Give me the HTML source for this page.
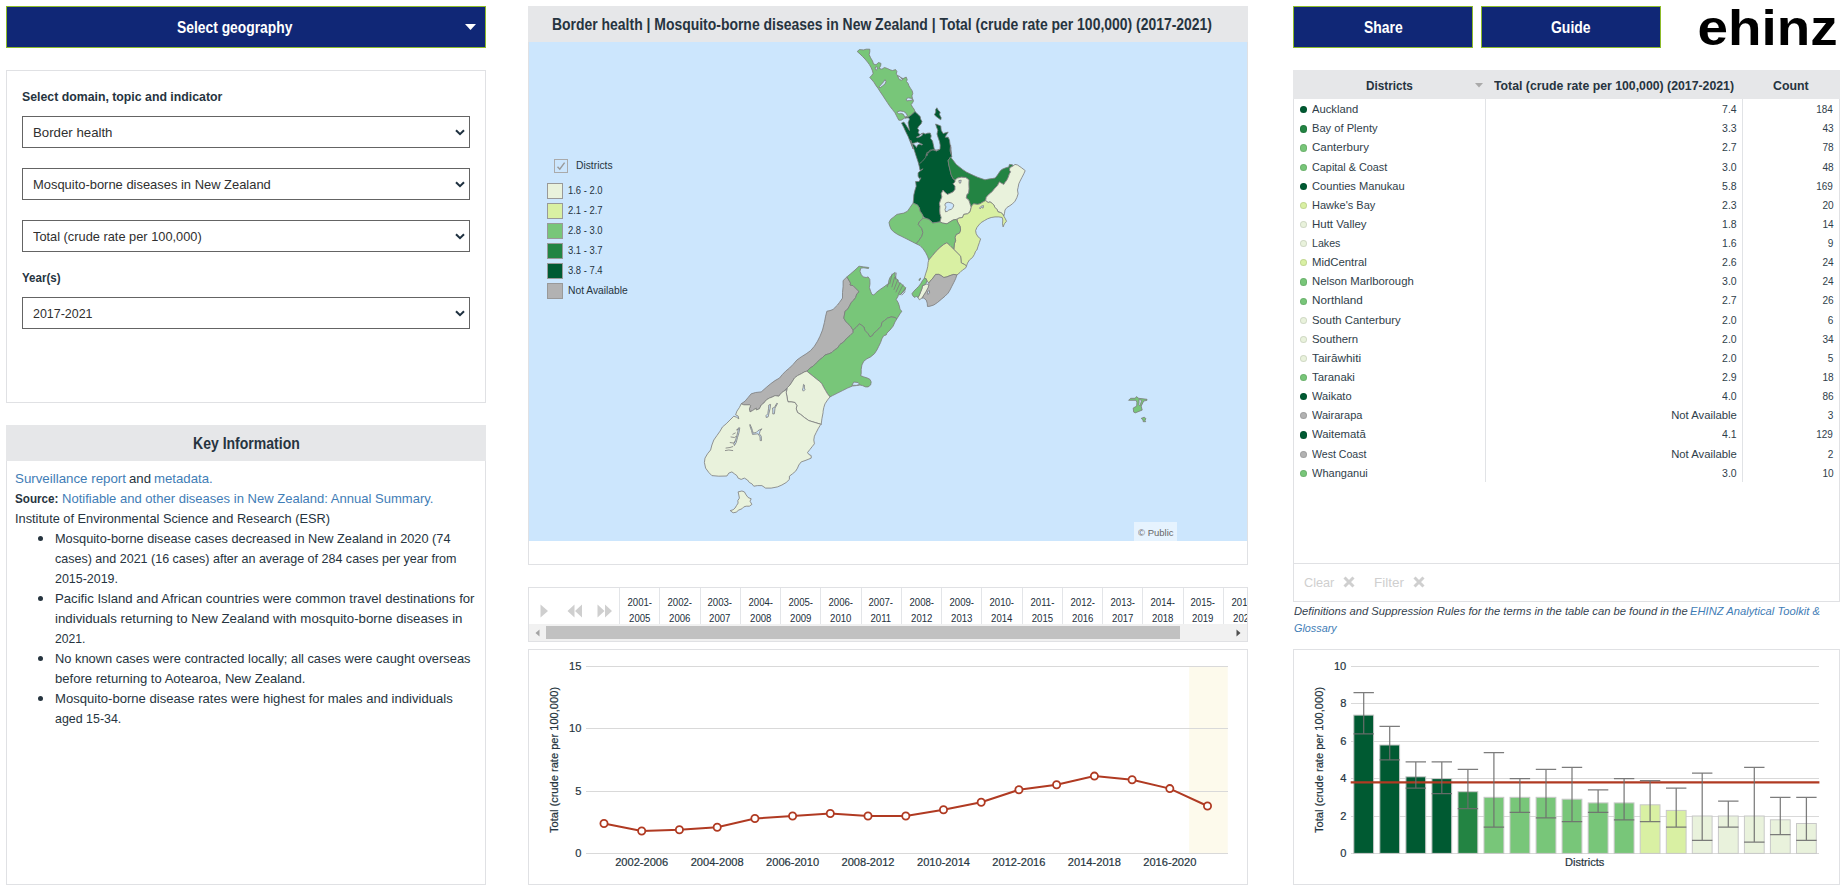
<!DOCTYPE html>
<html lang="en">
<head>
<meta charset="utf-8">
<title>EHINZ – Mosquito-borne diseases in New Zealand</title>
<style>
html,body{margin:0;padding:0;background:#fff}
body{width:1841px;height:896px;position:relative;overflow:hidden;font-family:"Liberation Sans",Arial,sans-serif;color:#22303c}
.t{position:absolute;white-space:nowrap;line-height:1;font-family:"Liberation Sans", Arial, sans-serif}
section{position:absolute;left:0;top:0;width:1841px;height:896px}
.abs{position:absolute;box-sizing:border-box}
.btn{background:#102776;border:1px solid #8dbb2a}
.panel{border:1px solid #e0e1e4;background:#fff}
.hdr{background:#e6e7e9}
.sel{border:1px solid #646464;background:#fff;left:22px;width:448px;height:32px}
.sel svg{position:absolute;right:4px;top:12px}
.bul{position:absolute;width:5px;height:5px;border-radius:50%;background:#26343f;left:37.9px}
.cell{position:absolute;top:0;width:40.26px;height:36px;border-left:1px solid #e3e5e8;box-sizing:border-box;text-align:center;font-size:10px;line-height:15.8px;color:#22303c;padding-top:7.2px}
.cell span{display:inline-block;transform:scaleX(.96)}
.dot{position:absolute;left:1299.5px;width:7.2px;height:7.2px;border-radius:50%;display:block;box-shadow:inset 0 0 0 1px rgba(0,0,0,.1)}
.sw{position:absolute;left:547px;width:16px;height:16px;box-sizing:border-box;border:1px solid #999}
svg text{font-family:"Liberation Sans",Arial,sans-serif;font-size:11.1px;fill:#263540;stroke:#263540;stroke-width:.2px}
#map path{stroke:#7b7b7b;stroke-width:.8;stroke-linejoin:round}
</style>
</head>
<body>

<!-- ======================= LEFT COLUMN ======================= -->
<section id="left">
  <div class="abs btn" style="left:6px;top:6px;width:480px;height:42px"></div>
  <svg class="abs" style="left:465px;top:24px" width="11" height="6" viewBox="0 0 11 6"><path d="M0 0H11L5.5 6Z" fill="#fff"/></svg>

  <div class="abs panel" style="left:6px;top:70px;width:480px;height:333px"></div>
  <div class="abs sel" style="top:116px"><svg width="10" height="7" viewBox="0 0 10 7"><path d="M1 1.2L5 5.2L9 1.2" fill="none" stroke="#1f3140" stroke-width="2"/></svg></div>
  <div class="abs sel" style="top:168px"><svg width="10" height="7" viewBox="0 0 10 7"><path d="M1 1.2L5 5.2L9 1.2" fill="none" stroke="#1f3140" stroke-width="2"/></svg></div>
  <div class="abs sel" style="top:220px"><svg width="10" height="7" viewBox="0 0 10 7"><path d="M1 1.2L5 5.2L9 1.2" fill="none" stroke="#1f3140" stroke-width="2"/></svg></div>
  <div class="abs sel" style="top:297px"><svg width="10" height="7" viewBox="0 0 10 7"><path d="M1 1.2L5 5.2L9 1.2" fill="none" stroke="#1f3140" stroke-width="2"/></svg></div>

  <div class="abs panel" style="left:6px;top:425px;width:480px;height:460px"></div>
  <div class="abs hdr" style="left:6px;top:425px;width:480px;height:36px"></div>
  <i class="bul" style="top:535.5px"></i><i class="bul" style="top:595.5px"></i><i class="bul" style="top:655.5px"></i><i class="bul" style="top:695.5px"></i>
<span class="t" id="t0" style="top:20.00px;font-size:15.6px;color:#fff;font-weight:700;left:176.70px;transform-origin:0 0;transform:scaleX(0.8877);">Select geography</span>
<span class="t" id="t1" style="top:90.00px;font-size:13.4px;color:#263440;font-weight:700;left:22.20px;transform-origin:0 0;transform:scaleX(0.9187);">Select domain, topic and indicator</span>
<span class="t" id="t2" style="top:126.00px;font-size:13.1px;color:#2f2f2f;left:32.80px;transform-origin:0 0;transform:scaleX(1.0111);">Border health</span>
<span class="t" id="t3" style="top:178.00px;font-size:13.1px;color:#2f2f2f;left:32.80px;transform-origin:0 0;transform:scaleX(0.9870);">Mosquito-borne diseases in New Zealand</span>
<span class="t" id="t4" style="top:230.00px;font-size:13.1px;color:#2f2f2f;left:32.80px;transform-origin:0 0;transform:scaleX(0.9779);">Total (crude rate per 100,000)</span>
<span class="t" id="t5" style="top:271.00px;font-size:13.4px;color:#263440;font-weight:700;left:22.20px;transform-origin:0 0;transform:scaleX(0.8641);">Year(s)</span>
<span class="t" id="t6" style="top:307.00px;font-size:13.1px;color:#2f2f2f;left:32.50px;transform-origin:0 0;transform:scaleX(0.9501);">2017-2021</span>
<span class="t" id="t7" style="top:436.00px;font-size:15.6px;color:#263440;font-weight:700;left:192.50px;transform-origin:0 0;transform:scaleX(0.8997);">Key Information</span>
<span class="t" id="t8" style="top:472.00px;font-size:13.2px;color:#3f7db6;left:14.50px;transform-origin:0 0;transform:scaleX(1.0095);">Surveillance report</span>
<span class="t" id="t9" style="top:472.00px;font-size:13.2px;color:#263440;left:128.75px;transform-origin:0 0;transform:scaleX(0.9993);">and</span>
<span class="t" id="t10" style="top:472.00px;font-size:13.2px;color:#3f7db6;left:154.25px;transform-origin:0 0;transform:scaleX(1.0016);">metadata.</span>
<span class="t" id="t11" style="top:492.00px;font-size:13.2px;color:#263440;font-weight:700;left:14.50px;transform-origin:0 0;transform:scaleX(0.8858);">Source:</span>
<span class="t" id="t12" style="top:492.00px;font-size:13.2px;color:#3f7db6;left:61.50px;transform-origin:0 0;transform:scaleX(0.9885);">Notifiable and other diseases in New Zealand: Annual Summary.</span>
<span class="t" id="t13" style="top:512.00px;font-size:13.2px;color:#263440;left:14.50px;transform-origin:0 0;transform:scaleX(0.9701);">Institute of Environmental Science and Research (ESR)</span>
<span class="t" id="t14" style="top:532.00px;font-size:13.2px;color:#263440;left:54.50px;transform-origin:0 0;transform:scaleX(0.9668);">Mosquito-borne disease cases decreased in New Zealand in 2020 (74</span>
<span class="t" id="t15" style="top:552.00px;font-size:13.2px;color:#263440;left:54.50px;transform-origin:0 0;transform:scaleX(0.9492);">cases) and 2021 (16 cases) after an average of 284 cases per year from</span>
<span class="t" id="t16" style="top:572.00px;font-size:13.2px;color:#263440;left:54.50px;transform-origin:0 0;transform:scaleX(0.9440);">2015-2019.</span>
<span class="t" id="t17" style="top:592.00px;font-size:13.2px;color:#263440;left:54.50px;transform-origin:0 0;transform:scaleX(0.9988);">Pacific Island and African countries were common travel destinations for</span>
<span class="t" id="t18" style="top:612.00px;font-size:13.2px;color:#263440;left:54.50px;transform-origin:0 0;transform:scaleX(1.0052);">individuals returning to New Zealand with mosquito-borne diseases in</span>
<span class="t" id="t19" style="top:632.00px;font-size:13.2px;color:#263440;left:54.50px;transform-origin:0 0;transform:scaleX(0.9238);">2021.</span>
<span class="t" id="t20" style="top:652.00px;font-size:13.2px;color:#263440;left:54.50px;transform-origin:0 0;transform:scaleX(0.9756);">No known cases were contracted locally; all cases were caught overseas</span>
<span class="t" id="t21" style="top:672.00px;font-size:13.2px;color:#263440;left:54.50px;transform-origin:0 0;transform:scaleX(0.9904);">before returning to Aotearoa, New Zealand.</span>
<span class="t" id="t22" style="top:692.00px;font-size:13.2px;color:#263440;left:54.50px;transform-origin:0 0;transform:scaleX(0.9918);">Mosquito-borne disease rates were highest for males and individuals</span>
<span class="t" id="t23" style="top:712.00px;font-size:13.2px;color:#263440;left:54.50px;transform-origin:0 0;transform:scaleX(0.9417);">aged 15-34.</span>
</section>

<!-- ======================= CENTRE COLUMN ======================= -->
<section id="center">
  <div class="abs panel" style="left:528px;top:6px;width:720px;height:559px;border-top:0"></div>
  <div class="abs hdr" style="left:528px;top:6px;width:720px;height:36px"></div>
  <svg id="map" class="abs" style="left:529px;top:42px" width="718" height="499" viewBox="529 42 718 499">
    <rect x="528" y="42" width="719" height="499" fill="#cce6fd"/>
<path d="M857.2 51.5 L859.4 49.6 L863.5 49.9 L866.2 49.2 L869.8 49.2 L869.8 51.8 L869.2 54.6 L870.6 57.8 L872.5 60.9 L873.5 64.0 L876.0 64.8 L878.5 62.5 L881.0 63.4 L880.6 65.9 L879.1 68.4 L881.9 69.2 L884.4 67.5 L887.5 68.5 L890.0 69.8 L892.5 70.5 L895.6 69.6 L896.9 71.5 L896.2 74.0 L898.1 75.9 L900.6 77.5 L903.1 78.6 L906.2 77.1 L907.2 79.6 L906.5 81.5 L908.1 83.4 L909.0 85.9 L910.6 88.4 L912.2 90.9 L912.8 93.4 L911.9 95.9 L912.5 98.4 L913.5 100.9 L912.5 102.8 L911.2 104.6 L912.5 107.1 L914.0 109.0 L915.0 111.5 L912.5 114.0 L910.0 115.9 L908.1 117.1 L905.0 117.8 L903.1 119.0 L901.2 120.2 L898.8 120.2 L897.5 117.8 L896.2 115.2 L895.0 112.8 L892.5 109.6 L890.0 106.5 L887.5 102.8 L885.0 99.0 L882.5 95.2 L880.0 91.5 L878.1 88.4 L876.2 85.9 L873.8 82.1 L871.2 79.0 L869.8 77.5 L871.9 75.2 L873.1 73.4 L872.5 70.9 L871.2 67.8 L869.4 64.6 L867.5 62.1 L865.0 59.0 L862.5 56.5 L860.0 54.0Z" fill="#78c679"/>
<path d="M915.0 111.5 L917.5 114.0 L920.2 116.5 L920.6 119.0 L922.0 121.5 L921.0 124.0 L919.0 125.9 L917.5 128.4 L919.0 130.2 L918.1 132.8 L920.0 134.6 L923.1 133.0 L925.2 134.0 L927.5 133.2 L930.2 133.0 L931.2 135.9 L930.6 138.4 L932.5 140.9 L933.2 144.0 L934.0 147.8 L934.5 149.8 L936.5 151.0 L940.0 149.2 L940.2 145.2 L939.5 141.5 L938.2 137.8 L937.0 134.0 L937.8 130.2 L936.5 127.1 L935.6 124.0 L937.8 124.8 L940.8 126.0 L941.2 130.2 L943.1 133.5 L948.2 132.1 L946.2 135.2 L945.0 137.2 L948.2 137.2 L949.5 140.2 L950.0 144.0 L950.8 147.8 L950.2 151.5 L951.5 155.2 L950.6 145.0 L950.0 150.0 L951.2 153.8 L951.9 156.9 L950.6 156.9 L948.1 160.6 L948.8 165.0 L950.0 170.0 L951.2 175.0 L953.1 178.8 L955.0 180.0 L955.0 181.9 L953.1 183.8 L955.0 186.2 L955.0 189.4 L953.1 191.9 L950.6 193.1 L947.5 194.4 L944.4 191.9 L943.1 190.0 L941.2 193.8 L941.9 196.9 L940.6 200.0 L939.4 203.8 L940.0 206.2 L939.8 210.0 L940.0 213.8 L941.2 217.5 L940.0 221.9 L936.2 222.5 L932.5 223.1 L931.2 221.2 L928.8 219.4 L925.0 218.1 L923.1 216.2 L921.9 213.8 L920.0 211.2 L919.4 208.1 L917.5 205.0 L913.1 203.1 L913.5 200.0 L913.8 195.0 L915.0 190.0 L916.2 186.2 L915.6 181.5 L919.0 181.5 L921.0 177.8 L919.4 178.5 L918.1 176.2 L918.1 172.8 L920.2 171.0 L923.1 168.8 L920.0 170.5 L919.4 166.9 L918.1 161.9 L916.2 156.2 L914.4 150.6 L912.5 145.0 L910.6 140.0 L913.1 149.0 L910.6 142.8 L908.1 136.5 L905.6 131.5 L903.8 127.5 L901.5 123.0 L903.8 122.0 L905.8 124.8 L907.5 127.5 L909.5 130.5 L908.8 126.5 L908.1 122.8 L909.5 119.0 L908.5 117.8 L905.0 118.0 L908.1 117.1 L910.0 115.9 L912.5 114.0Z" fill="#005a32"/>
<path d="M936.9 107.8 L938.2 110.2 L940.2 112.1 L939.5 114.6 L941.2 117.8 L940.8 119.8 L938.8 118.5 L936.2 116.5 L934.4 114.8 L935.8 112.1 L935.6 109.6Z" fill="#005a32"/>
<path d="M950.6 156.9 L951.9 158.8 L954.4 161.9 L956.2 164.4 L959.4 166.9 L962.5 169.4 L966.2 171.9 L970.0 173.8 L973.8 175.6 L977.5 177.2 L981.2 178.5 L985.0 179.8 L988.8 179.0 L992.5 178.5 L995.2 178.0 L997.5 175.0 L1000.0 171.2 L1001.9 169.4 L1005.0 168.1 L1008.8 166.9 L1009.4 164.4 L1012.5 164.8 L1012.8 166.2 L1010.0 167.5 L1009.4 170.0 L1010.6 171.9 L1009.4 173.8 L1008.1 177.5 L1006.9 180.0 L1005.0 182.5 L1003.8 184.4 L1001.2 183.1 L999.4 181.9 L997.5 185.6 L995.0 188.1 L992.5 191.2 L990.6 193.1 L988.1 195.0 L986.2 197.5 L985.6 200.6 L983.1 201.9 L980.0 203.8 L977.5 204.4 L973.8 203.8 L971.9 205.6 L971.2 207.5 L970.0 203.8 L968.8 200.0 L966.2 198.1 L966.9 194.4 L968.5 193.1 L969.0 188.8 L968.8 183.8 L969.0 179.8 L965.6 177.5 L961.2 177.2 L957.5 178.1 L955.0 180.0 L953.1 178.8 L951.2 175.0 L950.0 170.0 L948.8 165.0 L948.1 160.6Z" fill="#238443"/>
<path d="M955.0 180.0 L957.5 178.1 L961.2 177.2 L965.6 177.5 L969.0 179.8 L968.8 183.8 L969.0 188.8 L968.5 193.1 L966.9 194.4 L966.2 198.1 L968.8 200.0 L970.0 203.8 L971.2 207.5 L970.0 211.9 L967.5 213.8 L963.8 214.4 L962.5 217.5 L958.8 218.1 L956.2 219.4 L953.1 220.0 L950.0 221.9 L946.9 223.8 L942.5 223.1 L940.0 221.9 L941.2 217.5 L940.0 213.8 L939.8 210.0 L940.0 206.2 L939.4 203.8 L940.6 200.0 L941.9 196.9 L941.2 193.8 L943.1 190.0 L944.4 191.9 L947.5 194.4 L950.6 193.1 L953.1 191.9 L955.0 189.4 L955.0 186.2 L953.1 183.8 L955.0 181.9Z" fill="#e9f2dc"/>
<path d="M1012.8 166.2 L1015.0 164.4 L1017.5 165.0 L1021.2 167.5 L1025.2 170.6 L1023.8 173.8 L1021.9 177.5 L1020.0 181.2 L1018.8 183.8 L1018.1 187.5 L1017.5 190.0 L1018.1 193.8 L1016.9 197.5 L1015.0 201.2 L1012.5 203.8 L1010.0 205.6 L1006.9 207.5 L1005.0 210.0 L1004.4 213.8 L1003.8 216.2 L1002.5 213.8 L1000.6 212.5 L998.1 211.9 L996.9 209.4 L995.0 207.5 L993.8 205.0 L991.9 203.1 L990.0 201.9 L988.1 202.5 L985.6 200.6 L986.2 197.5 L988.1 195.0 L990.6 193.1 L992.5 191.2 L995.0 188.1 L997.5 185.6 L999.4 181.9 L1001.2 183.1 L1003.8 184.4 L1005.0 182.5 L1006.9 180.0 L1008.1 177.5 L1009.4 173.8 L1010.6 171.9 L1009.4 170.0 L1010.0 167.5Z" fill="#e9f2dc"/>
<path d="M971.2 207.5 L971.9 205.6 L973.8 203.8 L977.5 204.4 L980.0 203.8 L983.1 201.9 L985.6 200.6 L988.1 202.5 L990.0 201.9 L991.9 203.1 L993.8 205.0 L995.0 207.5 L996.9 209.4 L998.1 211.9 L1000.6 212.5 L1002.5 213.8 L1003.8 216.2 L1005.0 218.1 L1006.5 221.2 L1004.4 223.8 L1003.1 226.9 L1002.5 223.8 L1002.8 220.0 L1002.2 217.5 L998.8 216.9 L995.0 216.9 L991.2 217.5 L987.5 218.8 L984.4 220.6 L981.2 222.5 L978.8 225.0 L976.9 227.5 L975.6 230.6 L976.2 233.8 L978.1 236.9 L980.6 238.8 L979.4 242.5 L978.1 246.2 L976.9 250.0 L975.6 251.2 L974.4 254.4 L972.5 257.5 L969.4 260.0 L967.5 263.1 L966.5 266.0 L964.4 264.4 L961.2 262.8 L961.0 260.0 L960.6 256.2 L957.5 253.1 L953.8 249.4 L954.4 243.8 L955.6 240.6 L955.0 237.5 L956.2 234.4 L959.4 233.1 L960.6 230.0 L960.0 226.2 L958.1 223.1 L956.9 220.0 L958.8 218.1 L962.5 217.5 L963.8 214.4 L967.5 213.8 L970.0 211.9Z" fill="#d9f0a3"/>
<path d="M913.1 203.1 L910.0 207.5 L907.5 211.2 L903.8 213.1 L900.0 213.8 L896.9 214.4 L893.8 216.9 L890.6 219.4 L889.0 222.5 L889.8 226.2 L891.2 229.4 L893.8 231.9 L897.5 234.4 L901.2 236.2 L905.0 238.1 L908.8 240.0 L912.5 241.9 L916.2 243.8 L918.8 240.6 L921.9 236.2 L922.8 232.5 L921.9 228.8 L920.0 226.2 L918.1 224.4 L919.4 221.9 L921.9 219.4 L923.1 218.1 L923.1 216.2 L921.9 213.8 L920.0 211.2 L919.4 208.1 L917.5 205.0Z" fill="#78c679"/>
<path d="M923.1 218.1 L925.0 218.1 L928.8 219.4 L931.2 221.2 L932.5 223.1 L936.2 222.5 L940.0 221.9 L942.5 223.1 L946.9 223.8 L950.0 221.9 L953.1 220.0 L956.2 219.4 L956.9 220.0 L958.1 223.1 L960.0 226.2 L960.6 230.0 L959.4 233.1 L956.2 234.4 L955.0 237.5 L955.6 240.6 L954.4 243.8 L953.8 249.4 L950.0 245.6 L946.9 242.8 L943.8 244.4 L940.0 247.5 L936.2 251.2 L932.5 255.6 L928.8 260.0 L927.5 256.2 L925.6 252.5 L923.1 248.8 L920.0 245.6 L916.2 243.8 L918.8 240.6 L921.9 236.2 L922.8 232.5 L921.9 228.8 L920.0 226.2 L918.1 224.4 L919.4 221.9 L921.9 219.4Z" fill="#78c679"/>
<path d="M928.8 260.0 L932.5 255.6 L936.2 251.2 L940.0 247.5 L943.8 244.4 L946.9 242.8 L950.0 245.6 L953.8 249.4 L957.5 253.1 L960.6 256.2 L961.0 260.0 L961.2 262.8 L964.4 264.4 L966.5 266.0 L965.6 268.1 L962.5 270.0 L960.0 272.5 L956.9 275.0 L953.8 274.4 L950.0 275.6 L946.9 276.9 L943.8 277.5 L941.2 275.6 L938.8 274.4 L935.6 274.4 L933.8 276.9 L931.9 279.4 L930.0 281.2 L928.8 283.1 L926.9 280.6 L926.2 278.8 L924.4 278.1 L925.6 273.8 L926.9 270.0 L927.8 266.2 L928.1 262.5Z" fill="#d9f0a3"/>
<path d="M928.8 283.1 L930.0 281.2 L931.9 279.4 L933.8 276.9 L935.6 274.4 L938.8 274.4 L941.2 275.6 L943.8 277.5 L946.9 276.9 L950.0 275.6 L953.8 274.4 L956.9 275.0 L955.6 278.8 L953.8 282.5 L951.9 286.2 L950.0 290.0 L948.1 293.1 L945.0 296.2 L941.2 299.4 L937.5 302.5 L933.8 305.0 L930.0 306.2 L927.5 306.5 L927.2 303.1 L926.2 300.0 L923.8 298.1 L921.9 298.1 L923.8 295.0 L926.2 291.2 L928.1 287.5 L928.8 285.0Z" fill="#b2b2b2"/>
<path d="M921.9 298.1 L923.8 295.0 L926.2 291.2 L928.1 287.5 L928.8 285.0 L926.9 284.0 L924.4 285.0 L922.5 285.6 L921.9 288.8 L920.6 291.9 L919.4 295.0 L918.1 297.5 L919.4 299.8Z" fill="#e9f2dc"/>
<path d="M924.4 278.1 L926.2 278.8 L926.9 280.6 L926.2 283.1 L924.4 285.0 L922.5 285.6 L921.9 288.8 L920.6 291.9 L919.4 295.0 L918.1 297.5 L916.2 296.2 L915.0 297.5 L913.1 296.2 L911.9 293.8 L913.8 291.2 L916.2 288.8 L918.8 286.2 L920.6 283.8 L922.5 280.6Z M919.0 279.4 L920.6 278.1 L920.0 280.0 L919.0 280.6Z" fill="#78c679"/>
<path d="M846.9 276.9 L843.1 280.6 L843.1 286.2 L842.5 292.5 L842.5 298.1 L839.4 302.5 L837.5 305.0 L833.1 309.4 L830.0 310.6 L826.9 311.2 L825.6 316.2 L824.4 322.5 L822.5 330.0 L820.0 336.2 L817.5 341.2 L814.4 346.2 L810.6 350.6 L806.2 353.8 L801.2 356.9 L796.9 360.0 L793.1 364.4 L789.4 368.1 L785.6 371.2 L782.5 374.4 L779.4 378.1 L775.0 380.6 L770.6 383.8 L766.2 387.5 L761.2 391.9 L755.6 392.5 L751.2 393.8 L748.1 397.5 L745.0 401.2 L741.2 403.8 L741.2 403.8 L743.8 404.8 L749.4 404.8 L750.6 405.6 L749.4 408.8 L750.0 411.9 L752.5 410.6 L756.2 408.1 L756.2 410.0 L759.4 408.8 L761.2 405.0 L763.8 403.1 L766.2 400.0 L769.4 398.1 L772.5 396.9 L775.0 395.6 L778.8 396.2 L781.2 393.1 L783.8 391.2 L787.5 387.5 L790.0 385.0 L792.5 381.2 L794.4 378.1 L797.5 375.6 L801.2 373.8 L804.4 371.9 L806.9 371.2 L810.0 368.1 L813.1 366.2 L816.2 363.1 L819.4 360.0 L822.5 357.5 L825.0 355.0 L828.8 353.8 L831.9 352.5 L834.4 350.0 L837.5 348.1 L840.0 344.4 L843.8 341.9 L846.2 338.8 L850.0 335.6 L853.1 332.5 L853.1 330.0 L852.5 329.4 L850.6 326.2 L848.1 323.8 L845.6 321.2 L843.8 318.1 L844.4 315.0 L845.0 311.2 L847.5 309.4 L849.4 306.2 L851.2 302.5 L853.8 300.0 L855.6 297.5 L856.9 293.8 L859.0 291.9 L858.1 290.6 L855.6 288.1 L853.1 285.6 L850.0 285.0 L850.6 283.1 L848.8 280.0 L846.9 276.9Z" fill="#b2b2b2"/>
<path d="M846.9 276.9 L850.6 273.8 L855.0 270.0 L859.0 266.2 L863.8 266.9 L868.8 267.5 L868.5 268.5 L863.8 267.8 L860.8 268.1 L860.0 271.2 L861.2 274.4 L863.1 276.9 L866.2 277.5 L868.1 276.9 L869.8 279.4 L870.0 283.8 L869.4 287.5 L870.6 291.2 L871.9 294.4 L873.8 295.0 L876.2 292.5 L879.4 290.0 L882.5 287.8 L885.0 286.2 L886.2 285.0 L888.5 283.8 L888.8 280.6 L890.0 277.5 L891.9 275.0 L893.8 273.1 L895.2 272.5 L895.0 275.6 L896.2 278.8 L898.1 280.0 L898.5 282.5 L900.6 283.1 L902.5 285.0 L904.0 286.2 L905.6 287.8 L905.0 290.6 L902.5 292.5 L900.6 294.4 L898.1 295.0 L898.1 296.2 L896.2 299.4 L898.1 302.5 L899.4 306.2 L900.0 309.4 L901.9 311.2 L900.0 313.8 L898.1 316.9 L896.9 318.8 L895.0 317.5 L891.2 316.9 L887.5 318.1 L884.4 320.6 L881.9 322.5 L881.2 326.2 L878.8 328.8 L876.2 331.2 L873.8 333.1 L872.5 335.6 L870.0 336.9 L868.1 333.8 L865.0 330.6 L863.8 326.9 L861.2 325.0 L859.4 323.8 L856.2 327.5 L853.1 330.0 L852.5 329.4 L850.6 326.2 L848.1 323.8 L845.6 321.2 L843.8 318.1 L844.4 315.0 L845.0 311.2 L847.5 309.4 L849.4 306.2 L851.2 302.5 L853.8 300.0 L855.6 297.5 L856.9 293.8 L859.0 291.9 L858.1 290.6 L855.6 288.1 L853.1 285.6 L850.0 285.0 L850.6 283.1 L848.8 280.0 L846.9 276.9Z" fill="#78c679"/>
<path d="M896.9 318.8 L895.0 321.9 L893.1 326.2 L890.0 330.0 L886.9 333.1 L886.2 335.0 L883.8 335.6 L881.9 338.8 L880.6 342.5 L878.8 346.2 L876.9 350.0 L874.4 353.8 L870.6 356.9 L866.9 358.8 L863.8 361.2 L861.9 365.0 L861.2 369.4 L861.2 373.8 L860.6 375.6 L863.8 376.9 L867.5 378.1 L870.0 379.4 L871.2 381.9 L870.6 385.0 L868.1 386.9 L865.6 386.9 L862.5 385.6 L860.0 385.0 L856.2 385.6 L852.5 386.0 L847.5 388.1 L842.5 390.6 L837.5 393.1 L832.5 395.6 L830.0 396.9 L827.5 393.8 L825.6 390.6 L823.8 387.5 L821.9 383.8 L819.4 381.2 L816.2 378.8 L813.1 376.2 L810.0 373.8 L806.9 371.2 L810.0 368.1 L813.1 366.2 L816.2 363.1 L819.4 360.0 L822.5 357.5 L825.0 355.0 L828.8 353.8 L831.9 352.5 L834.4 350.0 L837.5 348.1 L840.0 344.4 L843.8 341.9 L846.2 338.8 L850.0 335.6 L853.1 332.5 L853.1 330.0 L856.2 327.5 L859.4 323.8 L861.2 325.0 L863.8 326.9 L865.0 330.6 L868.1 333.8 L870.0 336.9 L872.5 335.6 L873.8 333.1 L876.2 331.2 L878.8 328.8 L881.2 326.2 L881.9 322.5 L884.4 320.6 L887.5 318.1 L891.2 316.9 L895.0 317.5 L896.9 318.8Z" fill="#78c679"/>
<path d="M830.0 396.9 L827.5 400.0 L825.0 403.8 L823.8 407.5 L823.1 411.2 L823.1 412.5 L821.9 418.8 L821.2 424.4 L815.0 422.5 L808.8 420.6 L804.4 417.5 L800.6 414.4 L797.5 412.5 L796.2 408.8 L796.9 405.6 L795.0 402.5 L791.2 401.9 L788.1 401.9 L787.5 400.0 L786.9 396.2 L786.2 392.5 L786.9 389.4 L787.5 387.5 L790.0 385.0 L792.5 381.2 L794.4 378.1 L797.5 375.6 L801.2 373.8 L804.4 371.9 L806.9 371.2 L806.9 371.2 L810.0 373.8 L813.1 376.2 L816.2 378.8 L819.4 381.2 L821.9 383.8 L823.8 387.5 L825.6 390.6 L827.5 393.8Z" fill="#e9f2dc"/>
<path d="M741.2 403.8 L739.4 407.5 L736.9 411.2 L735.6 414.8 L738.1 416.0 L738.8 418.8 L736.5 417.2 L733.8 416.2 L730.0 420.0 L726.2 423.8 L722.5 426.9 L720.0 431.2 L716.9 435.6 L713.8 440.0 L711.9 445.0 L710.6 450.0 L707.5 453.8 L705.0 458.1 L704.4 462.5 L705.6 468.1 L708.8 472.5 L711.9 475.6 L718.8 476.2 L726.9 476.0 L728.8 473.1 L731.9 471.9 L734.4 473.8 L736.9 475.6 L738.1 478.1 L741.2 479.4 L744.4 478.1 L747.5 480.0 L749.4 482.5 L751.9 483.8 L753.8 486.2 L757.5 485.6 L761.9 485.6 L765.6 488.1 L771.2 488.1 L777.5 486.9 L781.9 485.0 L786.2 482.5 L789.4 479.4 L789.4 476.2 L792.5 473.8 L795.6 471.2 L797.5 468.1 L798.8 465.0 L801.2 461.9 L805.0 460.6 L808.1 459.4 L811.2 458.1 L811.2 455.6 L808.8 454.4 L807.5 452.5 L810.0 449.4 L812.5 446.2 L814.4 443.8 L813.8 440.0 L814.4 436.2 L816.2 432.5 L818.1 428.8 L820.0 425.6 L821.2 424.4 L815.0 422.5 L808.8 420.6 L804.4 417.5 L800.6 414.4 L797.5 412.5 L796.2 408.8 L796.9 405.6 L795.0 402.5 L791.2 401.9 L788.1 401.9 L787.5 400.0 L786.9 396.2 L786.2 392.5 L786.9 389.4 L783.8 391.2 L781.2 393.1 L778.8 396.2 L775.0 395.6 L772.5 396.9 L769.4 398.1 L766.2 400.0 L763.8 403.1 L761.2 405.0 L759.4 408.8 L756.2 410.0 L756.2 408.1 L752.5 410.6 L750.0 411.9 L749.4 408.8 L750.6 405.6 L749.4 404.8 L743.8 404.8 L741.2 403.8Z" fill="#e9f2dc"/>
<path d="M738.1 491.9 L741.9 491.0 L744.4 491.9 L746.2 495.0 L748.1 497.5 L751.2 498.8 L750.0 501.2 L751.9 504.4 L749.4 506.2 L746.2 506.2 L743.8 506.9 L741.9 508.8 L738.8 510.0 L736.2 512.2 L733.1 512.8 L730.2 510.6 L733.1 509.8 L735.0 508.1 L736.5 505.6 L738.1 503.1 L737.8 500.6 L739.4 498.1 L738.8 495.0Z" fill="#e9f2dc"/>
<path d="M1128.6 400.3 L1130.6 398.3 L1135.2 398.3 L1136.4 396.6 L1138.7 398.3 L1147.0 399.3 L1147.0 400.3 L1143.7 401.1 L1141.2 406.1 L1142.2 410.1 L1135.2 412.9 L1133.7 412.1 L1133.2 408.1 L1136.7 406.1 L1136.9 402.1 L1135.9 400.3Z M1141.2 418.4 L1144.2 417.2 L1146.0 418.7 L1145.0 420.2 L1145.7 421.7 L1143.2 421.7 L1142.9 419.7Z" fill="#78c679"/>
<path d="M945.6 203.1 L948.1 202.2 L951.9 203.1 L953.8 205.0 L953.1 207.5 L951.2 209.4 L948.8 210.0 L947.5 211.2 L945.6 211.9 L945.0 209.4 L946.0 206.9 L944.8 205.0Z" fill="#cce6fd" stroke-width="0.6"/>
<path d="M958.8 180.6 L961.2 180.2 L960.6 183.1 L959.4 183.1Z" fill="#cce6fd" stroke-width="0.6"/>
<path d="M979.4 208.1 L981.2 206.2 L983.5 205.6 L983.1 208.1 L981.5 207.5 L980.0 208.8Z" fill="#cce6fd" stroke-width="0.6"/>
<path d="M927.5 291.5 L929.4 290.6 L929.6 293.1 L927.8 294.4Z" fill="#cce6fd" stroke-width="0.6"/>
<path d="M851.9 385.2 L853.8 382.1 L858.1 382.5 L859.6 384.4 L856.2 385.4Z" fill="#cce6fd" stroke-width="0.6"/>
<path d="M1138.9 399.6 L1141.7 400.3 L1139.9 405.9 L1138.8 404.9 L1139.1 402.1Z" fill="#cce6fd" stroke-width="0.6"/>
<path d="M750.0 424.4 L751.2 426.9 L752.5 430.6 L753.1 433.1 L756.2 432.5 L758.1 430.6 L761.9 428.8 L760.0 431.2 L759.4 433.8 L761.2 436.2 L761.5 440.6 L760.2 440.6 L760.0 436.9 L758.1 433.8 L756.2 434.0 L752.5 434.4 L751.5 430.6 L749.8 425.6Z" fill="#cce6fd" stroke-width="0.6"/>
<path d="M768.8 405.0 L770.6 404.4 L770.0 408.8 L769.0 413.1 L768.1 416.9 L766.2 417.5 L766.0 415.6 L767.8 413.8 L768.5 408.8Z" fill="#cce6fd" stroke-width="0.6"/>
<path d="M772.5 408.1 L774.4 407.5 L776.9 403.1 L777.5 403.5 L775.0 408.1 L774.4 413.8 L772.8 414.0 L772.8 410.0Z" fill="#cce6fd" stroke-width="0.6"/>
<path d="M738.1 428.1 L739.8 427.8 L739.0 432.5 L737.5 437.5 L736.2 442.5 L734.4 445.6 L733.8 443.8 L735.6 440.0 L736.9 435.6 L737.8 431.9Z" fill="#cce6fd" stroke-width="0.6"/>
<path d="M803.5 384.4 L804.4 385.0 L804.4 388.1 L805.0 389.4 L803.5 391.2 L802.5 390.0 L803.1 387.5Z" fill="#cce6fd" stroke-width="0.6"/>
<path d="M911.5 143.6 L914.4 143.0 L917.5 142.0 L920.0 143.2 L922.5 144.4 L922.1 145.1 L919.4 144.2 L917.6 145.0 L916.5 147.5 L915.6 146.2 L914.0 144.4Z" fill="#cce6fd" stroke-width="0.6"/>
<path d="M923.1 133.2 L922.1 135.5 L919.5 136.9 L917.0 137.8 L916.5 137.0 L919.0 136.0 L921.0 134.2Z" fill="#cce6fd" stroke-width="0.6"/>
<path d="M878.8 87.1 L881.2 84.6 L883.8 81.5 L885.0 79.6 L886.0 81.5 L885.0 84.0 L882.5 85.9 L880.0 87.8Z" fill="#cce6fd" stroke-width="0.6"/>
<path d="M906.2 99.0 L908.1 97.8 L911.9 98.4 L912.5 100.2 L909.4 100.5 L906.9 100.9Z" fill="#cce6fd" stroke-width="0.6"/>
<path d="M897.5 75.9 L900.0 76.5 L901.2 78.4 L903.1 79.0 L901.9 80.2 L899.4 79.6Z" fill="#cce6fd" stroke-width="0.6"/>
<path d="M875.0 67.8 L876.9 66.5 L877.5 69.0 L876.0 70.2Z" fill="#cce6fd" stroke-width="0.6"/>
<path d="M896.9 112.1 L900.0 110.9 L903.8 111.5 L906.2 113.4 L907.5 115.9 L905.0 117.1 L903.1 114.0 L900.6 113.4 L898.8 114.0Z" fill="#cce6fd" stroke-width="0.6"/>
<path d="M936.5 151.0 L933.8 150.2 L930.0 150.0 L928.1 152.8 L926.9 155.9" fill="none"/>
<path d="M926.9 152.5 L925.6 157.5 L922.5 161.2 L919.4 163.8" fill="none"/>
<path d="M940.0 149.4 L936.2 150.0 L932.5 149.4 L929.4 151.9 L926.9 152.5" fill="none"/>
<path d="M926.9 155.9 L926.2 154.0" fill="none"/>
<path d="M732.5 434.4 L735.6 432.8" fill="none" stroke="#8fa3b8" stroke-width="1.2"/>
<path d="M730.6 436.9 L734.4 437.5 L736.5 436.2" fill="none" stroke="#8fa3b8" stroke-width="1.2"/>
<path d="M729.8 442.5 L733.8 443.1 L735.2 441.2" fill="none" stroke="#8fa3b8" stroke-width="1.2"/>
<path d="M725.6 448.1 L730.0 447.5 L733.1 446.5" fill="none" stroke="#8fa3b8" stroke-width="1.2"/>
<path d="M725.0 450.6 L728.8 450.0 L733.1 450.6" fill="none" stroke="#8fa3b8" stroke-width="1.2"/>
<path d="M736.2 430.0 L738.8 429.0" fill="none" stroke="#8fa3b8" stroke-width="1.2"/>
<path d="M892.1 274.0 L889.8 283.5" fill="none" stroke="#cce6fd" stroke-width="2" stroke-linecap="round"/>
<path d="M894.5 277.5 L891.9 286.9" fill="none" stroke="#cce6fd" stroke-width="2" stroke-linecap="round"/>
<path d="M897.6 280.0 L894.0 289.5" fill="none" stroke="#cce6fd" stroke-width="2" stroke-linecap="round"/>
<path d="M900.0 283.1 L896.0 292.0" fill="none" stroke="#cce6fd" stroke-width="2" stroke-linecap="round"/>
<path d="M903.0 285.0 L898.5 293.8" fill="none" stroke="#cce6fd" stroke-width="2" stroke-linecap="round"/>
<path d="M905.5 288.0 L900.8 294.5" fill="none" stroke="#cce6fd" stroke-width="2" stroke-linecap="round"/>
<path d="M896.2 273.1 L895.5 279.0" fill="none" stroke="#cce6fd" stroke-width="2" stroke-linecap="round"/>
<path d="M888.5 283.1 L887.2 286.9" fill="none" stroke="#cce6fd" stroke-width="2" stroke-linecap="round"/>
<path d="M901.9 295.0 L905.0 291.9" fill="none" stroke="#cce6fd" stroke-width="2" stroke-linecap="round"/>
  </svg>
  <!-- legend -->
  <div class="abs" style="left:554px;top:159px;width:14px;height:14px;border:1px solid #aaa"></div>
  <svg class="abs" style="left:556px;top:161px" width="10" height="10" viewBox="0 0 10 10"><path d="M1.5 5.8L3.8 8.2L8.6 1.6" fill="none" stroke="#999" stroke-width="1.4"/></svg>
  <i class="sw" style="top:183px;background:#e9f2dc"></i>
  <i class="sw" style="top:203px;background:#d9f0a3"></i>
  <i class="sw" style="top:223px;background:#78c679"></i>
  <i class="sw" style="top:243px;background:#238443"></i>
  <i class="sw" style="top:263px;background:#005a32"></i>
  <i class="sw" style="top:283px;background:#b2b2b2"></i>
  <div class="abs" style="left:1134px;top:522px;width:43px;height:19px;background:rgba(255,255,255,.5)"></div>

  <!-- time slider -->
  <div class="abs panel" style="left:528px;top:587px;width:720px;height:55px;overflow:hidden">
<div class="cell" style="left:90.0px"><span>2001-<br>2005</span></div>
<div class="cell" style="left:130.3px"><span>2002-<br>2006</span></div>
<div class="cell" style="left:170.5px"><span>2003-<br>2007</span></div>
<div class="cell" style="left:210.8px"><span>2004-<br>2008</span></div>
<div class="cell" style="left:251.0px"><span>2005-<br>2009</span></div>
<div class="cell" style="left:291.3px"><span>2006-<br>2010</span></div>
<div class="cell" style="left:331.6px"><span>2007-<br>2011</span></div>
<div class="cell" style="left:371.8px"><span>2008-<br>2012</span></div>
<div class="cell" style="left:412.1px"><span>2009-<br>2013</span></div>
<div class="cell" style="left:452.3px"><span>2010-<br>2014</span></div>
<div class="cell" style="left:492.6px"><span>2011-<br>2015</span></div>
<div class="cell" style="left:532.9px"><span>2012-<br>2016</span></div>
<div class="cell" style="left:573.1px"><span>2013-<br>2017</span></div>
<div class="cell" style="left:613.4px"><span>2014-<br>2018</span></div>
<div class="cell" style="left:653.6px"><span>2015-<br>2019</span></div>
<div class="cell" style="left:693.9px"><span>2016-<br>2020</span></div>
    <div class="abs" style="left:0;top:36px;width:718px;height:17px;background:#f1f1f1"></div>
    <div class="abs" style="left:17px;top:38px;width:634px;height:13px;background:#c1c1c1"></div>
    <svg class="abs" style="left:6px;top:41px" width="5" height="8" viewBox="0 0 5 8"><path d="M4.5 0.5V7.5L0.5 4Z" fill="#a3a3a3"/></svg>
    <svg class="abs" style="left:707px;top:41px" width="5" height="8" viewBox="0 0 5 8"><path d="M0.5 0.5V7.5L4.5 4Z" fill="#505050"/></svg>
    <svg class="abs" style="left:11px;top:16px" width="72" height="14" viewBox="0 0 72 14">
      <path d="M0.5 0.5V13.5L8 7Z" fill="#cfcfcf"/>
      <path d="M34.5 0.5V13.5L27.5 7ZM42 0.5V13.5L35 7Z" fill="#cfcfcf"/>
      <path d="M57.5 0.5V13.5L64.5 7ZM65 0.5V13.5L72 7Z" fill="#cfcfcf"/>
    </svg>
  </div>

  <!-- line chart -->
  <div class="abs panel" style="left:528px;top:649px;width:720px;height:236px"></div>
  <svg class="abs" style="left:0;top:0" width="1841" height="896" viewBox="0 0 1841 896">
<rect x="1189.2" y="666.3" width="38.5" height="187.1" fill="#fdfaec"/>
<line x1="586" x2="1228" y1="853.5" y2="853.5" stroke="#d9d9d9" stroke-width="1" shape-rendering="crispEdges"/>
<text x="581.4" y="856.9" text-anchor="end">0</text>
<line x1="586" x2="1228" y1="791.5" y2="791.5" stroke="#d9d9d9" stroke-width="1" shape-rendering="crispEdges"/>
<text x="581.4" y="794.9" text-anchor="end">5</text>
<line x1="586" x2="1228" y1="728.5" y2="728.5" stroke="#d9d9d9" stroke-width="1" shape-rendering="crispEdges"/>
<text x="581.4" y="731.9" text-anchor="end">10</text>
<line x1="586" x2="1228" y1="666.5" y2="666.5" stroke="#d9d9d9" stroke-width="1" shape-rendering="crispEdges"/>
<text x="581.4" y="669.9" text-anchor="end">15</text>
<polyline fill="none" stroke="#b03a22" stroke-width="2" points="604.0,823.5 641.7,831.0 679.4,829.7 717.2,827.2 754.9,818.5 792.6,816.0 830.3,813.5 868.0,816.0 905.8,816.0 943.5,809.8 981.2,802.3 1018.9,789.8 1056.6,784.8 1094.4,776.1 1132.1,779.8 1169.8,788.6 1207.5,806.0"/>
<circle cx="604.0" cy="823.5" r="3.6" fill="#fff" stroke="#b03a22" stroke-width="1.8"/>
<circle cx="641.7" cy="831.0" r="3.6" fill="#fff" stroke="#b03a22" stroke-width="1.8"/>
<circle cx="679.4" cy="829.7" r="3.6" fill="#fff" stroke="#b03a22" stroke-width="1.8"/>
<circle cx="717.2" cy="827.2" r="3.6" fill="#fff" stroke="#b03a22" stroke-width="1.8"/>
<circle cx="754.9" cy="818.5" r="3.6" fill="#fff" stroke="#b03a22" stroke-width="1.8"/>
<circle cx="792.6" cy="816.0" r="3.6" fill="#fff" stroke="#b03a22" stroke-width="1.8"/>
<circle cx="830.3" cy="813.5" r="3.6" fill="#fff" stroke="#b03a22" stroke-width="1.8"/>
<circle cx="868.0" cy="816.0" r="3.6" fill="#fff" stroke="#b03a22" stroke-width="1.8"/>
<circle cx="905.8" cy="816.0" r="3.6" fill="#fff" stroke="#b03a22" stroke-width="1.8"/>
<circle cx="943.5" cy="809.8" r="3.6" fill="#fff" stroke="#b03a22" stroke-width="1.8"/>
<circle cx="981.2" cy="802.3" r="3.6" fill="#fff" stroke="#b03a22" stroke-width="1.8"/>
<circle cx="1018.9" cy="789.8" r="3.6" fill="#fff" stroke="#b03a22" stroke-width="1.8"/>
<circle cx="1056.6" cy="784.8" r="3.6" fill="#fff" stroke="#b03a22" stroke-width="1.8"/>
<circle cx="1094.4" cy="776.1" r="3.6" fill="#fff" stroke="#b03a22" stroke-width="1.8"/>
<circle cx="1132.1" cy="779.8" r="3.6" fill="#fff" stroke="#b03a22" stroke-width="1.8"/>
<circle cx="1169.8" cy="788.6" r="3.6" fill="#fff" stroke="#b03a22" stroke-width="1.8"/>
<circle cx="1207.5" cy="806.0" r="3.6" fill="#fff" stroke="#b03a22" stroke-width="1.8"/>
<text x="641.7" y="866" text-anchor="middle">2002-2006</text>
<text x="717.2" y="866" text-anchor="middle">2004-2008</text>
<text x="792.6" y="866" text-anchor="middle">2006-2010</text>
<text x="868.0" y="866" text-anchor="middle">2008-2012</text>
<text x="943.5" y="866" text-anchor="middle">2010-2014</text>
<text x="1018.9" y="866" text-anchor="middle">2012-2016</text>
<text x="1094.4" y="866" text-anchor="middle">2014-2018</text>
<text x="1169.8" y="866" text-anchor="middle">2016-2020</text>
<text transform="translate(557.8 760) rotate(-90)" text-anchor="middle">Total (crude rate per 100,000)</text>
  </svg>
<span class="t" id="t24" style="top:17.00px;font-size:15.6px;color:#263440;font-weight:700;left:552.20px;transform-origin:0 0;transform:scaleX(0.8942);">Border health | Mosquito-borne diseases in New Zealand | Total (crude rate per 100,000) (2017-2021)</span>
<span class="t" id="t25" style="top:161.00px;font-size:10.1px;color:#263440;left:575.50px;transform-origin:0 0;transform:scaleX(1.0198);">Districts</span>
<span class="t" id="t26" style="top:186.00px;font-size:10.1px;color:#263440;left:567.50px;transform-origin:0 0;transform:scaleX(0.9340);">1.6 - 2.0</span>
<span class="t" id="t27" style="top:206.00px;font-size:10.1px;color:#263440;left:567.50px;transform-origin:0 0;transform:scaleX(0.9340);">2.1 - 2.7</span>
<span class="t" id="t28" style="top:226.00px;font-size:10.1px;color:#263440;left:567.50px;transform-origin:0 0;transform:scaleX(0.9340);">2.8 - 3.0</span>
<span class="t" id="t29" style="top:246.00px;font-size:10.1px;color:#263440;left:567.50px;transform-origin:0 0;transform:scaleX(0.9340);">3.1 - 3.7</span>
<span class="t" id="t30" style="top:266.00px;font-size:10.1px;color:#263440;left:567.50px;transform-origin:0 0;transform:scaleX(0.9340);">3.8 - 7.4</span>
<span class="t" id="t31" style="top:286.00px;font-size:10.1px;color:#263440;left:567.50px;transform-origin:0 0;transform:scaleX(1.0181);">Not Available</span>
<span class="t" id="t32" style="top:529.00px;font-size:9.3px;color:#666;left:1138.00px;transform-origin:0 0;transform:scaleX(1.0211);">© Public</span>
</section>

<!-- ======================= RIGHT COLUMN ======================= -->
<section id="right">
  <div class="abs btn" style="left:1293px;top:6px;width:180px;height:42px"></div>
  <div class="abs btn" style="left:1481px;top:6px;width:180px;height:42px"></div>
  <svg class="abs" style="left:1690px;top:0" width="151" height="60" viewBox="1690 0 151 60"><text x="1697.6" y="45.3" textLength="140" lengthAdjust="spacingAndGlyphs" style="font-size:50.5px;font-weight:700;fill:#000;stroke:none">ehinz</text></svg>

  <!-- table -->
  <div class="abs panel" style="left:1293px;top:70px;width:547px;height:494px;border-top:0"></div>
  <div class="abs hdr" style="left:1293px;top:70px;width:547px;height:29px"></div>
  <div class="abs" style="left:1485px;top:99px;width:1px;height:383px;background:#e1e3e6"></div>
  <div class="abs" style="left:1742px;top:99px;width:1px;height:383px;background:#e1e3e6"></div>
  <svg class="abs" style="left:1474.5px;top:83px" width="8" height="5" viewBox="0 0 8 5"><path d="M0 0H8L4 4.5Z" fill="#aaa"/></svg>
<i class="dot" style="top:106.20px;background:#005a32"></i><i class="dot" style="top:125.33px;background:#238443"></i><i class="dot" style="top:144.46px;background:#78c679"></i><i class="dot" style="top:163.59px;background:#78c679"></i><i class="dot" style="top:182.72px;background:#005a32"></i><i class="dot" style="top:201.85px;background:#d9f0a3"></i><i class="dot" style="top:220.98px;background:#e9f2dc"></i><i class="dot" style="top:240.11px;background:#e9f2dc"></i><i class="dot" style="top:259.24px;background:#d9f0a3"></i><i class="dot" style="top:278.37px;background:#78c679"></i><i class="dot" style="top:297.50px;background:#78c679"></i><i class="dot" style="top:316.63px;background:#e9f2dc"></i><i class="dot" style="top:335.76px;background:#e9f2dc"></i><i class="dot" style="top:354.89px;background:#e9f2dc"></i><i class="dot" style="top:374.02px;background:#78c679"></i><i class="dot" style="top:393.15px;background:#005a32"></i><i class="dot" style="top:412.28px;background:#b2b2b2"></i><i class="dot" style="top:431.41px;background:#005a32"></i><i class="dot" style="top:450.54px;background:#b2b2b2"></i><i class="dot" style="top:469.67px;background:#78c679"></i>
  <!-- filter bar -->
  <div class="abs panel" style="left:1293px;top:563px;width:547px;height:39px"></div>
  <svg class="abs" style="left:1343px;top:576px" width="12" height="12" viewBox="0 0 12 12"><path d="M1.5 1.5L10.5 10.5M10.5 1.5L1.5 10.5" stroke="#cfcfcf" stroke-width="3" fill="none"/></svg>
  <svg class="abs" style="left:1413px;top:576px" width="12" height="12" viewBox="0 0 12 12"><path d="M1.5 1.5L10.5 10.5M10.5 1.5L1.5 10.5" stroke="#cfcfcf" stroke-width="3" fill="none"/></svg>

  <!-- bar chart -->
  <div class="abs panel" style="left:1293px;top:649px;width:547px;height:236px"></div>
  <svg class="abs" style="left:0;top:0" width="1841" height="896" viewBox="0 0 1841 896">
<line x1="1351" x2="1819" y1="853.5" y2="853.5" stroke="#d9d9d9" stroke-width="1" shape-rendering="crispEdges"/>
<text x="1346.3" y="856.9" text-anchor="end">0</text>
<line x1="1351" x2="1819" y1="816.5" y2="816.5" stroke="#d9d9d9" stroke-width="1" shape-rendering="crispEdges"/>
<text x="1346.3" y="819.9" text-anchor="end">2</text>
<line x1="1351" x2="1819" y1="778.5" y2="778.5" stroke="#d9d9d9" stroke-width="1" shape-rendering="crispEdges"/>
<text x="1346.3" y="781.9" text-anchor="end">4</text>
<line x1="1351" x2="1819" y1="741.5" y2="741.5" stroke="#d9d9d9" stroke-width="1" shape-rendering="crispEdges"/>
<text x="1346.3" y="744.9" text-anchor="end">6</text>
<line x1="1351" x2="1819" y1="703.5" y2="703.5" stroke="#d9d9d9" stroke-width="1" shape-rendering="crispEdges"/>
<text x="1346.3" y="706.9" text-anchor="end">8</text>
<line x1="1351" x2="1819" y1="666.5" y2="666.5" stroke="#d9d9d9" stroke-width="1" shape-rendering="crispEdges"/>
<text x="1346.3" y="669.9" text-anchor="end">10</text>
<rect x="1353.8" y="715.1" width="19.8" height="138.3" fill="#005a32" stroke="#c8c8c8" stroke-width="1"/>
<rect x="1379.8" y="745.0" width="19.8" height="108.4" fill="#005a32" stroke="#c8c8c8" stroke-width="1"/>
<rect x="1405.9" y="776.8" width="19.8" height="76.6" fill="#005a32" stroke="#c8c8c8" stroke-width="1"/>
<rect x="1431.9" y="778.6" width="19.8" height="74.8" fill="#005a32" stroke="#c8c8c8" stroke-width="1"/>
<rect x="1458.0" y="791.7" width="19.8" height="61.7" fill="#238443" stroke="#c8c8c8" stroke-width="1"/>
<rect x="1484.0" y="797.3" width="19.8" height="56.1" fill="#78c679" stroke="#c8c8c8" stroke-width="1"/>
<rect x="1510.0" y="797.3" width="19.8" height="56.1" fill="#78c679" stroke="#c8c8c8" stroke-width="1"/>
<rect x="1536.1" y="797.3" width="19.8" height="56.1" fill="#78c679" stroke="#c8c8c8" stroke-width="1"/>
<rect x="1562.1" y="799.2" width="19.8" height="54.2" fill="#78c679" stroke="#c8c8c8" stroke-width="1"/>
<rect x="1588.2" y="802.9" width="19.8" height="50.5" fill="#78c679" stroke="#c8c8c8" stroke-width="1"/>
<rect x="1614.2" y="802.9" width="19.8" height="50.5" fill="#78c679" stroke="#c8c8c8" stroke-width="1"/>
<rect x="1640.2" y="804.8" width="19.8" height="48.6" fill="#d9f0a3" stroke="#c8c8c8" stroke-width="1"/>
<rect x="1666.3" y="810.4" width="19.8" height="43.0" fill="#d9f0a3" stroke="#c8c8c8" stroke-width="1"/>
<rect x="1692.3" y="816.0" width="19.8" height="37.4" fill="#e9f2dc" stroke="#c8c8c8" stroke-width="1"/>
<rect x="1718.4" y="816.0" width="19.8" height="37.4" fill="#e9f2dc" stroke="#c8c8c8" stroke-width="1"/>
<rect x="1744.4" y="816.0" width="19.8" height="37.4" fill="#e9f2dc" stroke="#c8c8c8" stroke-width="1"/>
<rect x="1770.4" y="819.8" width="19.8" height="33.6" fill="#e9f2dc" stroke="#c8c8c8" stroke-width="1"/>
<rect x="1796.5" y="823.5" width="19.8" height="29.9" fill="#e9f2dc" stroke="#c8c8c8" stroke-width="1"/>
<line x1="1350.7" x2="1819.4" y1="782.4" y2="782.4" stroke="#b03a22" stroke-width="2.2"/>
<path d="M1363.7 692.7V733.8M1353.5 692.7H1373.9M1353.5 733.8H1373.9" stroke="#6e6e6e" stroke-width="1.25" fill="none" opacity="0.9"/>
<path d="M1389.7 726.3V759.9M1379.5 726.3H1399.9M1379.5 759.9H1399.9" stroke="#6e6e6e" stroke-width="1.25" fill="none" opacity="0.9"/>
<path d="M1415.8 761.8V788.0M1405.6 761.8H1426.0M1405.6 788.0H1426.0" stroke="#6e6e6e" stroke-width="1.25" fill="none" opacity="0.9"/>
<path d="M1441.8 761.8V793.6M1431.6 761.8H1452.0M1431.6 793.6H1452.0" stroke="#6e6e6e" stroke-width="1.25" fill="none" opacity="0.9"/>
<path d="M1467.9 769.3V808.5M1457.7 769.3H1478.1M1457.7 808.5H1478.1" stroke="#6e6e6e" stroke-width="1.25" fill="none" opacity="0.9"/>
<path d="M1493.9 752.5V827.2M1483.7 752.5H1504.1M1483.7 827.2H1504.1" stroke="#6e6e6e" stroke-width="1.25" fill="none" opacity="0.9"/>
<path d="M1519.9 778.6V812.3M1509.7 778.6H1530.1M1509.7 812.3H1530.1" stroke="#6e6e6e" stroke-width="1.25" fill="none" opacity="0.9"/>
<path d="M1546.0 769.3V817.9M1535.8 769.3H1556.2M1535.8 817.9H1556.2" stroke="#6e6e6e" stroke-width="1.25" fill="none" opacity="0.9"/>
<path d="M1572.0 767.4V821.6M1561.8 767.4H1582.2M1561.8 821.6H1582.2" stroke="#6e6e6e" stroke-width="1.25" fill="none" opacity="0.9"/>
<path d="M1598.1 789.9V812.3M1587.9 789.9H1608.3M1587.9 812.3H1608.3" stroke="#6e6e6e" stroke-width="1.25" fill="none" opacity="0.9"/>
<path d="M1624.1 778.6V819.8M1613.9 778.6H1634.3M1613.9 819.8H1634.3" stroke="#6e6e6e" stroke-width="1.25" fill="none" opacity="0.9"/>
<path d="M1650.1 780.5V821.6M1639.9 780.5H1660.3M1639.9 821.6H1660.3" stroke="#6e6e6e" stroke-width="1.25" fill="none" opacity="0.9"/>
<path d="M1676.2 788.0V827.2M1666.0 788.0H1686.4M1666.0 827.2H1686.4" stroke="#6e6e6e" stroke-width="1.25" fill="none" opacity="0.9"/>
<path d="M1702.2 773.0V840.3M1692.0 773.0H1712.4M1692.0 840.3H1712.4" stroke="#6e6e6e" stroke-width="1.25" fill="none" opacity="0.9"/>
<path d="M1728.3 801.1V827.2M1718.1 801.1H1738.5M1718.1 827.2H1738.5" stroke="#6e6e6e" stroke-width="1.25" fill="none" opacity="0.9"/>
<path d="M1754.3 767.4V842.2M1744.1 767.4H1764.5M1744.1 842.2H1764.5" stroke="#6e6e6e" stroke-width="1.25" fill="none" opacity="0.9"/>
<path d="M1780.3 797.3V834.7M1770.1 797.3H1790.5M1770.1 834.7H1790.5" stroke="#6e6e6e" stroke-width="1.25" fill="none" opacity="0.9"/>
<path d="M1806.4 797.3V840.3M1796.2 797.3H1816.6M1796.2 840.3H1816.6" stroke="#6e6e6e" stroke-width="1.25" fill="none" opacity="0.9"/>
<text x="1584.7" y="865.5" text-anchor="middle">Districts</text>
<text transform="translate(1322.8 760) rotate(-90)" text-anchor="middle">Total (crude rate per 100,000)</text>
  </svg>
<span class="t" id="t33" style="top:20.00px;font-size:15.6px;color:#fff;font-weight:700;left:1363.80px;transform-origin:0 0;transform:scaleX(0.8929);">Share</span>
<span class="t" id="t34" style="top:20.00px;font-size:15.6px;color:#fff;font-weight:700;left:1551.20px;transform-origin:0 0;transform:scaleX(0.8962);">Guide</span>
<span class="t" id="t35" style="top:79.00px;font-size:13.6px;color:#263440;font-weight:700;left:1366.25px;transform-origin:0 0;transform:scaleX(0.8620);">Districts</span>
<span class="t" id="t36" style="top:79.00px;font-size:13.6px;color:#263440;font-weight:700;left:1494.30px;transform-origin:0 0;transform:scaleX(0.9032);">Total (crude rate per 100,000) (2017-2021)</span>
<span class="t" id="t37" style="top:79.00px;font-size:13.6px;color:#263440;font-weight:700;left:1773.20px;transform-origin:0 0;transform:scaleX(0.9092);">Count</span>
<span class="t" id="t38" style="top:104.00px;font-size:11.3px;color:#2f3e4a;left:1311.60px;transform-origin:0 0;transform:scaleX(0.9939);">Auckland</span>
<span class="t" id="t39" style="top:104.00px;font-size:11.3px;color:#2f3e4a;right:104.40px;transform-origin:100% 0;transform:scaleX(0.9288);">7.4</span>
<span class="t" id="t40" style="top:104.00px;font-size:11.3px;color:#2f3e4a;right:7.75px;transform-origin:100% 0;transform:scaleX(0.8802);">184</span>
<span class="t" id="t41" style="top:123.00px;font-size:11.3px;color:#2f3e4a;left:1311.60px;transform-origin:0 0;transform:scaleX(0.9855);">Bay of Plenty</span>
<span class="t" id="t42" style="top:123.00px;font-size:11.3px;color:#2f3e4a;right:104.40px;transform-origin:100% 0;transform:scaleX(0.9288);">3.3</span>
<span class="t" id="t43" style="top:123.00px;font-size:11.3px;color:#2f3e4a;right:7.75px;transform-origin:100% 0;transform:scaleX(0.8904);">43</span>
<span class="t" id="t44" style="top:142.00px;font-size:11.3px;color:#2f3e4a;left:1311.60px;transform-origin:0 0;transform:scaleX(1.0181);">Canterbury</span>
<span class="t" id="t45" style="top:142.00px;font-size:11.3px;color:#2f3e4a;right:104.40px;transform-origin:100% 0;transform:scaleX(0.9288);">2.7</span>
<span class="t" id="t46" style="top:142.00px;font-size:11.3px;color:#2f3e4a;right:7.75px;transform-origin:100% 0;transform:scaleX(0.8904);">78</span>
<span class="t" id="t47" style="top:162.00px;font-size:11.3px;color:#2f3e4a;left:1311.60px;transform-origin:0 0;transform:scaleX(0.9592);">Capital &amp; Coast</span>
<span class="t" id="t48" style="top:162.00px;font-size:11.3px;color:#2f3e4a;right:104.40px;transform-origin:100% 0;transform:scaleX(0.9288);">3.0</span>
<span class="t" id="t49" style="top:162.00px;font-size:11.3px;color:#2f3e4a;right:7.75px;transform-origin:100% 0;transform:scaleX(0.8904);">48</span>
<span class="t" id="t50" style="top:181.00px;font-size:11.3px;color:#2f3e4a;left:1311.60px;transform-origin:0 0;transform:scaleX(0.9840);">Counties Manukau</span>
<span class="t" id="t51" style="top:181.00px;font-size:11.3px;color:#2f3e4a;right:104.40px;transform-origin:100% 0;transform:scaleX(0.9288);">5.8</span>
<span class="t" id="t52" style="top:181.00px;font-size:11.3px;color:#2f3e4a;right:7.75px;transform-origin:100% 0;transform:scaleX(0.8802);">169</span>
<span class="t" id="t53" style="top:200.00px;font-size:11.3px;color:#2f3e4a;left:1311.60px;transform-origin:0 0;transform:scaleX(0.9745);">Hawke's Bay</span>
<span class="t" id="t54" style="top:200.00px;font-size:11.3px;color:#2f3e4a;right:104.40px;transform-origin:100% 0;transform:scaleX(0.9288);">2.3</span>
<span class="t" id="t55" style="top:200.00px;font-size:11.3px;color:#2f3e4a;right:7.75px;transform-origin:100% 0;transform:scaleX(0.8904);">20</span>
<span class="t" id="t56" style="top:219.00px;font-size:11.3px;color:#2f3e4a;left:1311.60px;transform-origin:0 0;transform:scaleX(1.0149);">Hutt Valley</span>
<span class="t" id="t57" style="top:219.00px;font-size:11.3px;color:#2f3e4a;right:104.40px;transform-origin:100% 0;transform:scaleX(0.9288);">1.8</span>
<span class="t" id="t58" style="top:219.00px;font-size:11.3px;color:#2f3e4a;right:7.75px;transform-origin:100% 0;transform:scaleX(0.8904);">14</span>
<span class="t" id="t59" style="top:238.00px;font-size:11.3px;color:#2f3e4a;left:1311.60px;transform-origin:0 0;transform:scaleX(0.9418);">Lakes</span>
<span class="t" id="t60" style="top:238.00px;font-size:11.3px;color:#2f3e4a;right:104.40px;transform-origin:100% 0;transform:scaleX(0.9288);">1.6</span>
<span class="t" id="t61" style="top:238.00px;font-size:11.3px;color:#2f3e4a;right:7.75px;transform-origin:100% 0;transform:scaleX(0.8893);">9</span>
<span class="t" id="t62" style="top:257.00px;font-size:11.3px;color:#2f3e4a;left:1311.60px;transform-origin:0 0;transform:scaleX(1.0050);">MidCentral</span>
<span class="t" id="t63" style="top:257.00px;font-size:11.3px;color:#2f3e4a;right:104.40px;transform-origin:100% 0;transform:scaleX(0.9288);">2.6</span>
<span class="t" id="t64" style="top:257.00px;font-size:11.3px;color:#2f3e4a;right:7.75px;transform-origin:100% 0;transform:scaleX(0.8904);">24</span>
<span class="t" id="t65" style="top:276.00px;font-size:11.3px;color:#2f3e4a;left:1311.60px;transform-origin:0 0;transform:scaleX(0.9997);">Nelson Marlborough</span>
<span class="t" id="t66" style="top:276.00px;font-size:11.3px;color:#2f3e4a;right:104.40px;transform-origin:100% 0;transform:scaleX(0.9288);">3.0</span>
<span class="t" id="t67" style="top:276.00px;font-size:11.3px;color:#2f3e4a;right:7.75px;transform-origin:100% 0;transform:scaleX(0.8904);">24</span>
<span class="t" id="t68" style="top:295.00px;font-size:11.3px;color:#2f3e4a;left:1311.60px;transform-origin:0 0;transform:scaleX(1.0371);">Northland</span>
<span class="t" id="t69" style="top:295.00px;font-size:11.3px;color:#2f3e4a;right:104.40px;transform-origin:100% 0;transform:scaleX(0.9288);">2.7</span>
<span class="t" id="t70" style="top:295.00px;font-size:11.3px;color:#2f3e4a;right:7.75px;transform-origin:100% 0;transform:scaleX(0.8904);">26</span>
<span class="t" id="t71" style="top:315.00px;font-size:11.3px;color:#2f3e4a;left:1311.60px;transform-origin:0 0;transform:scaleX(1.0023);">South Canterbury</span>
<span class="t" id="t72" style="top:315.00px;font-size:11.3px;color:#2f3e4a;right:104.40px;transform-origin:100% 0;transform:scaleX(0.9288);">2.0</span>
<span class="t" id="t73" style="top:315.00px;font-size:11.3px;color:#2f3e4a;right:7.75px;transform-origin:100% 0;transform:scaleX(0.8893);">6</span>
<span class="t" id="t74" style="top:334.00px;font-size:11.3px;color:#2f3e4a;left:1311.60px;transform-origin:0 0;transform:scaleX(1.0074);">Southern</span>
<span class="t" id="t75" style="top:334.00px;font-size:11.3px;color:#2f3e4a;right:104.40px;transform-origin:100% 0;transform:scaleX(0.9288);">2.0</span>
<span class="t" id="t76" style="top:334.00px;font-size:11.3px;color:#2f3e4a;right:7.75px;transform-origin:100% 0;transform:scaleX(0.8904);">34</span>
<span class="t" id="t77" style="top:353.00px;font-size:11.3px;color:#2f3e4a;left:1311.60px;transform-origin:0 0;transform:scaleX(1.0426);">Tairāwhiti</span>
<span class="t" id="t78" style="top:353.00px;font-size:11.3px;color:#2f3e4a;right:104.40px;transform-origin:100% 0;transform:scaleX(0.9288);">2.0</span>
<span class="t" id="t79" style="top:353.00px;font-size:11.3px;color:#2f3e4a;right:7.75px;transform-origin:100% 0;transform:scaleX(0.8893);">5</span>
<span class="t" id="t80" style="top:372.00px;font-size:11.3px;color:#2f3e4a;left:1311.60px;transform-origin:0 0;transform:scaleX(1.0046);">Taranaki</span>
<span class="t" id="t81" style="top:372.00px;font-size:11.3px;color:#2f3e4a;right:104.40px;transform-origin:100% 0;transform:scaleX(0.9288);">2.9</span>
<span class="t" id="t82" style="top:372.00px;font-size:11.3px;color:#2f3e4a;right:7.75px;transform-origin:100% 0;transform:scaleX(0.8904);">18</span>
<span class="t" id="t83" style="top:391.00px;font-size:11.3px;color:#2f3e4a;left:1311.60px;transform-origin:0 0;transform:scaleX(0.9804);">Waikato</span>
<span class="t" id="t84" style="top:391.00px;font-size:11.3px;color:#2f3e4a;right:104.40px;transform-origin:100% 0;transform:scaleX(0.9288);">4.0</span>
<span class="t" id="t85" style="top:391.00px;font-size:11.3px;color:#2f3e4a;right:7.75px;transform-origin:100% 0;transform:scaleX(0.8904);">86</span>
<span class="t" id="t86" style="top:410.00px;font-size:11.3px;color:#2f3e4a;left:1311.60px;transform-origin:0 0;transform:scaleX(0.9748);">Wairarapa</span>
<span class="t" id="t87" style="top:410.00px;font-size:11.3px;color:#2f3e4a;right:104.40px;transform-origin:100% 0;transform:scaleX(0.9977);">Not Available</span>
<span class="t" id="t88" style="top:410.00px;font-size:11.3px;color:#2f3e4a;right:7.75px;transform-origin:100% 0;transform:scaleX(0.8893);">3</span>
<span class="t" id="t89" style="top:429.00px;font-size:11.3px;color:#2f3e4a;left:1311.60px;transform-origin:0 0;transform:scaleX(1.0023);">Waitematā</span>
<span class="t" id="t90" style="top:429.00px;font-size:11.3px;color:#2f3e4a;right:104.40px;transform-origin:100% 0;transform:scaleX(0.9288);">4.1</span>
<span class="t" id="t91" style="top:429.00px;font-size:11.3px;color:#2f3e4a;right:7.75px;transform-origin:100% 0;transform:scaleX(0.8802);">129</span>
<span class="t" id="t92" style="top:449.00px;font-size:11.3px;color:#2f3e4a;left:1311.60px;transform-origin:0 0;transform:scaleX(0.9366);">West Coast</span>
<span class="t" id="t93" style="top:449.00px;font-size:11.3px;color:#2f3e4a;right:104.40px;transform-origin:100% 0;transform:scaleX(0.9977);">Not Available</span>
<span class="t" id="t94" style="top:449.00px;font-size:11.3px;color:#2f3e4a;right:7.75px;transform-origin:100% 0;transform:scaleX(0.8893);">2</span>
<span class="t" id="t95" style="top:468.00px;font-size:11.3px;color:#2f3e4a;left:1311.60px;transform-origin:0 0;transform:scaleX(0.9745);">Whanganui</span>
<span class="t" id="t96" style="top:468.00px;font-size:11.3px;color:#2f3e4a;right:104.40px;transform-origin:100% 0;transform:scaleX(0.9288);">3.0</span>
<span class="t" id="t97" style="top:468.00px;font-size:11.3px;color:#2f3e4a;right:7.75px;transform-origin:100% 0;transform:scaleX(0.8904);">10</span>
<span class="t" id="t98" style="top:576.00px;font-size:13.4px;color:#cfcfcf;left:1303.70px;transform-origin:0 0;transform:scaleX(0.9469);">Clear</span>
<span class="t" id="t99" style="top:576.00px;font-size:13.4px;color:#cfcfcf;left:1374.40px;transform-origin:0 0;transform:scaleX(1.0079);">Filter</span>
<span class="t" id="t100" style="top:606.00px;font-size:11px;color:#34424e;font-style:italic;left:1293.70px;transform-origin:0 0;transform:scaleX(1.0187);">Definitions and Suppression Rules for the terms in the table can be found in the</span>
<span class="t" id="t101" style="top:606.00px;font-size:11px;color:#3f7db6;font-style:italic;left:1690.00px;transform-origin:0 0;transform:scaleX(1.0190);">EHINZ Analytical Toolkit &amp;</span>
<span class="t" id="t102" style="top:623.00px;font-size:11px;color:#3f7db6;font-style:italic;left:1293.70px;transform-origin:0 0;transform:scaleX(0.9837);">Glossary</span>
</section>
</body>
</html>
